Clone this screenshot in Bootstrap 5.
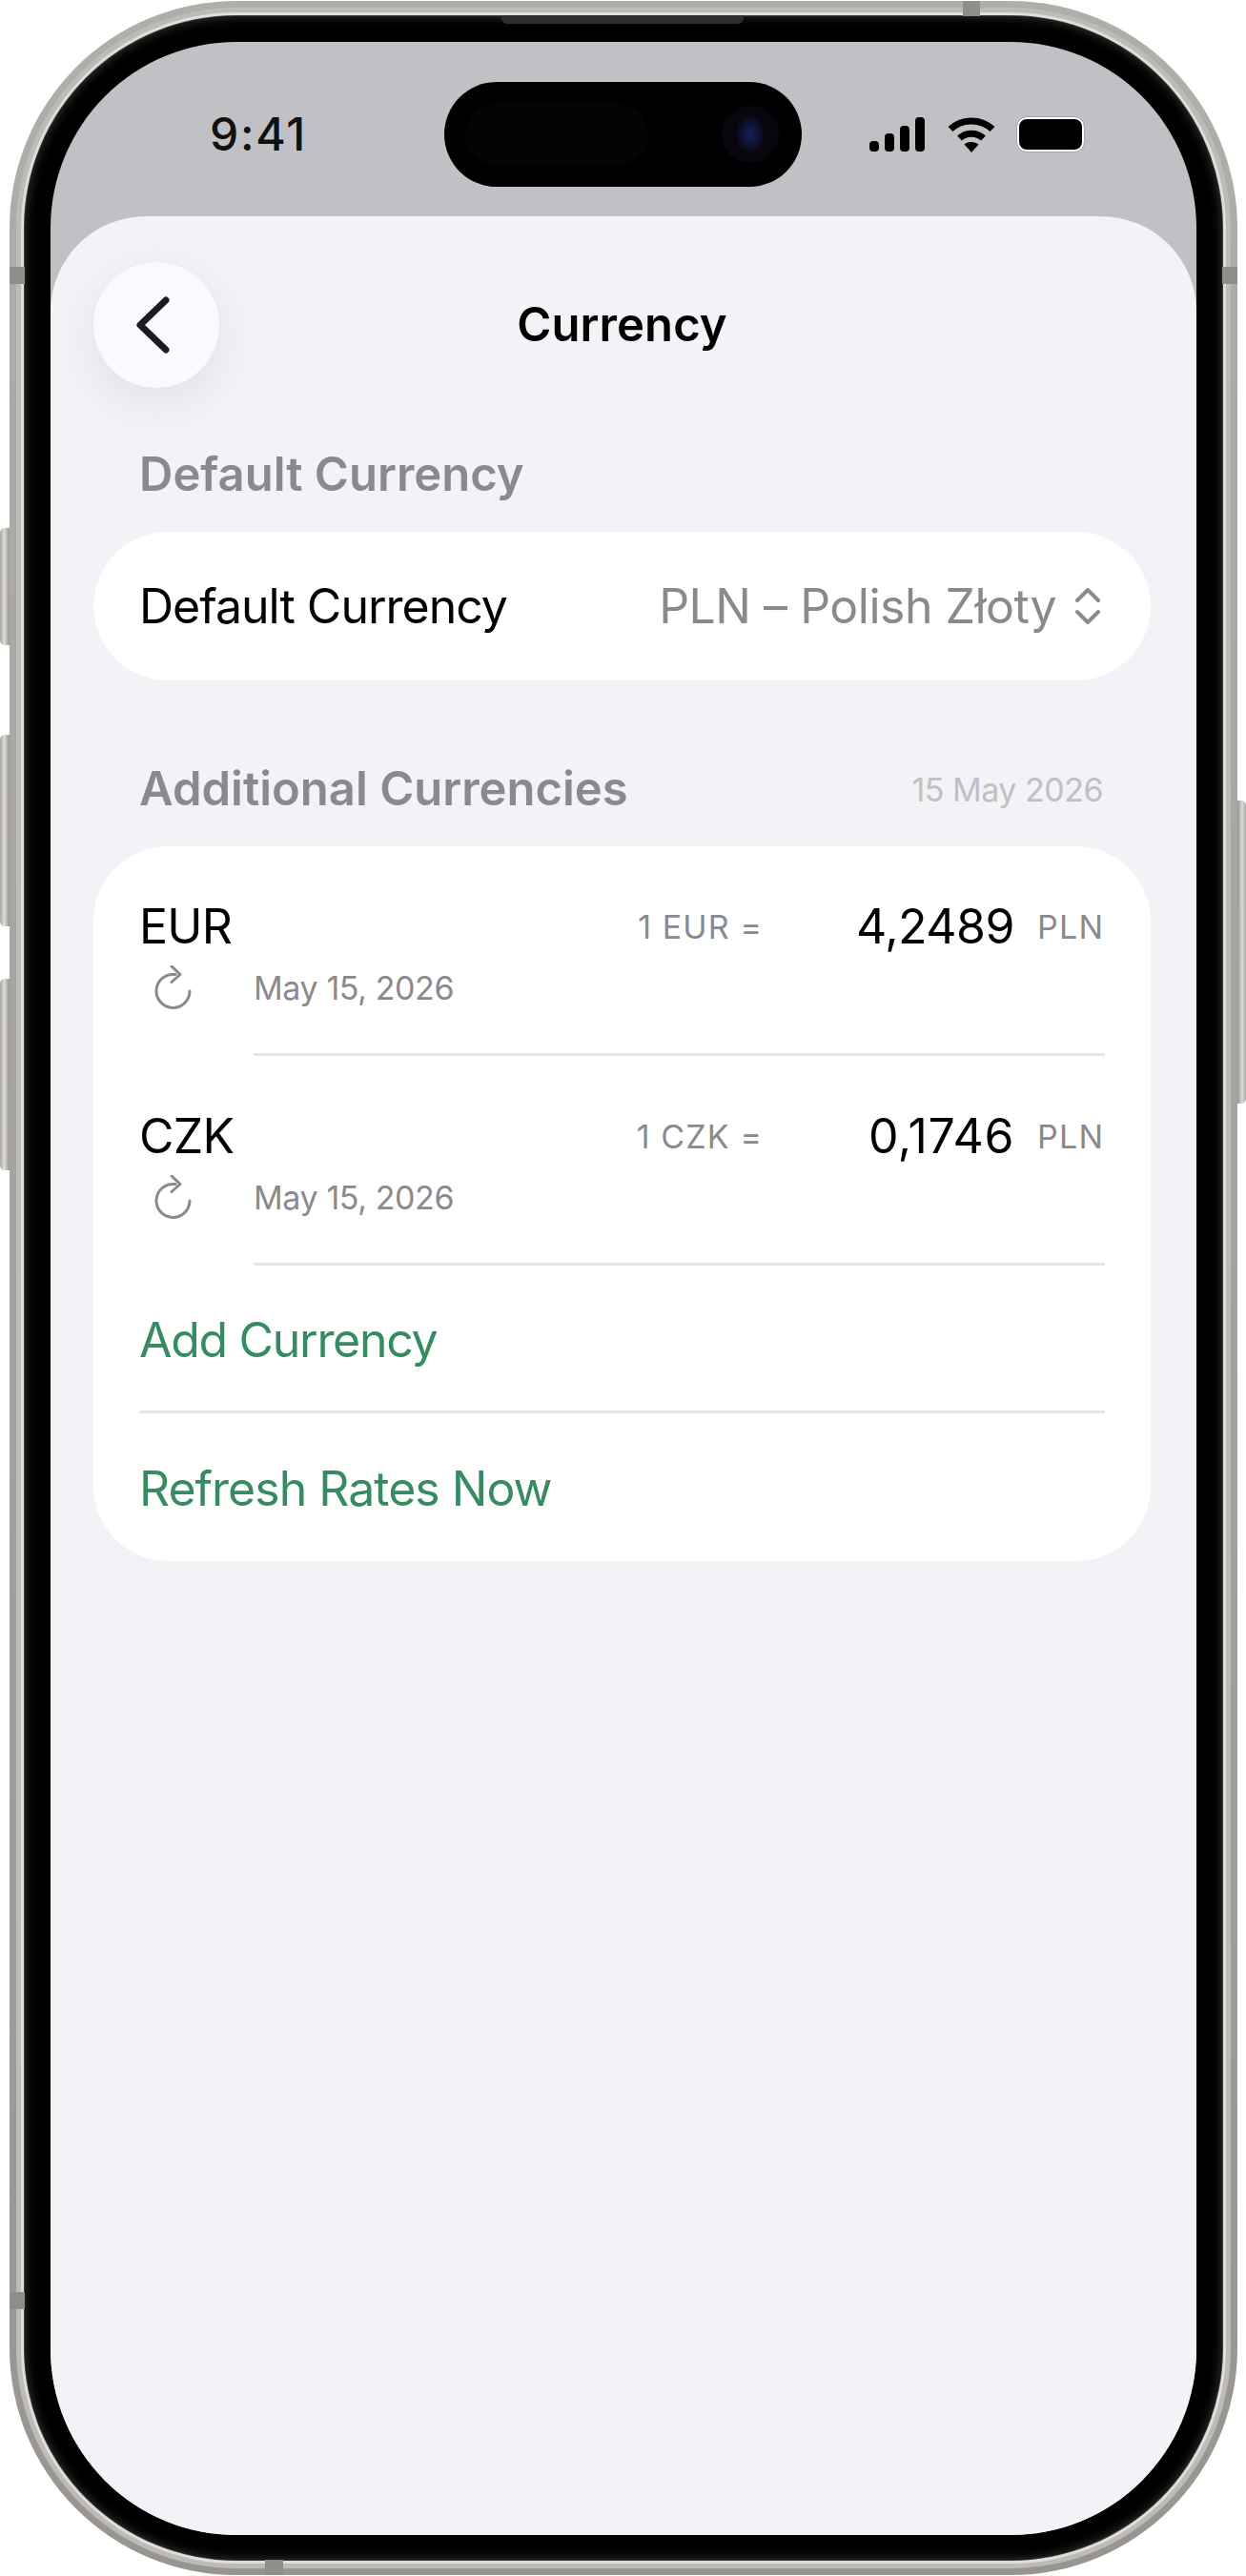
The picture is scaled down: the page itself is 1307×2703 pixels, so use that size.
<!DOCTYPE html>
<html lang="en">
<head>
  <meta charset="UTF-8" />
  <meta name="viewport" content="width=device-width, initial-scale=1.0">
  <title>Currency</title>
  <link href="https://cdn.jsdelivr.net/npm/bootstrap@5.3.3/dist/css/bootstrap.min.css" rel="stylesheet">
  <style>
    body{margin:0;background:#fff;font-family:Inter,"Liberation Sans",sans-serif;color:#000;width:1307px;height:2703px;overflow:hidden}
    /* ---------- phone frame ---------- */
    .phone-shell{position:relative;width:1288px;height:2701px;margin:1px 0 0 10px;padding:16px;border-radius:238px;background:linear-gradient(180deg,#b0aea8,#a3a09b 60%,#989591)}
    .phone-bezel{height:100%;padding:27px 27px 26px 27px;background:#000;border-radius:222px;box-shadow:0 0 0 1px #3c3c3a,0 0 0 4px #dfded8,0 0 0 9px #bdbbb6,inset 0 0 12px #3a3a3a}
    .phone-screen{height:100%;background:#c1c1c5;border-radius:195px;overflow:hidden;display:flex;flex-direction:column}
    .side-btn{position:absolute;width:10px;background:linear-gradient(90deg,#a8a6a2,#dedcd7 45%,#969490);border-radius:5px 0 0 5px}
    .side-btn.left{left:-10px}
    .side-btn.right{right:-9px;width:9px;border-radius:0 5px 5px 0;background:linear-gradient(90deg,#969490,#dedcd7 55%,#a8a6a2)}
    .band{position:absolute;background:#8f8d88}
    .speaker{position:absolute;left:516px;top:15px;width:254px;height:9px;background:#2e2e2e;border-radius:0 0 6px 6px}

    /* ---------- status bar ---------- */
    .status-bar{flex:0 0 183px;padding-top:42px;display:flex}
    .status-time{width:413px;height:110px;padding-left:167px;font-size:48px;line-height:110px;font-weight:500;letter-spacing:1.700px;color:#111}
    .island{width:375px;height:110px;background:#000;border-radius:55px;position:relative}
    .island-pill{position:absolute;left:22px;top:22px;width:192px;height:66px;border-radius:33px;background:#040404}
    .island-ring{position:absolute;right:24px;top:25px;width:60px;height:60px;border-radius:50%;background:#08060c}
    .island-lens{position:absolute;right:40px;top:36px;width:28px;height:38px;border-radius:50%;background:radial-gradient(ellipse at 50% 50%,#16225a 0,#10163a 35%,#0a0a16 70%,#050508 100%)}
    .status-icons{padding:0 0 0 71px;height:110px;display:flex;align-items:center}
    .battery-box{width:70px;height:36px;margin-left:23px;background:#000;border:2.5px solid #fff;outline:1px solid #a9a9ad;border-radius:10px}

    /* ---------- sheet ---------- */
    .sheet{flex:1;background:#f2f2f7;border-radius:100px 100px 0 0;padding:48px 48px 0 45px}
    .nav-row{display:grid;grid-template-columns:132px 1fr 132px;align-items:center;height:132px}
    .back-btn{width:132px;height:132px;border-radius:50%;background:#fafafe;border:0;padding:0 8px 0 0;box-shadow:0 14px 50px rgba(0,0,0,.08);display:flex;align-items:center;justify-content:center}
    .nav-title{text-align:center;font-size:49px;font-weight:600;line-height:60px;letter-spacing:.1px;margin:0}
    .section-label{display:flex;justify-content:space-between;align-items:center;padding:0 50px 0 48px;height:60px;margin-bottom:30px;color:#8a8a8e;font-size:49px;font-weight:600;letter-spacing:0}
    .section-date{font-size:34px;font-weight:400;color:#c0c0c4;letter-spacing:-.5px}
    .group-box{background:#fff;border-radius:78px;padding:0 49px 0 48px}
    .default-row{height:156px;display:flex;justify-content:space-between;align-items:center;font-size:50px;letter-spacing:-1px}
    .default-value{display:flex;align-items:center;gap:20px;color:#8a8a8e;padding-right:4px;letter-spacing:-.5px}

    .rate-row{padding-top:54px;padding-bottom:47px}
    .rate-row .code-line{display:flex;align-items:center;height:60px}
    .rate-code{font-size:50px;line-height:60px;flex:1;letter-spacing:-.7px}
    .rate-label{font-size:34px;color:#8a8a8e;letter-spacing:1.100px}
    .rate-num{width:264px;text-align:right;font-size:50px;letter-spacing:-.5px}
    .rate-num.wide-ones{letter-spacing:.6px}
    .rate-unit{width:70px;margin-left:24px;text-align:right;font-size:34px;color:#8a8a8e;letter-spacing:1.300px}
    .sub-line{display:flex;align-items:center;height:44px;margin-top:12px;font-size:34px;color:#8a8a8e;letter-spacing:-.4px}
    .refresh-cell{width:120px;padding-left:16px;display:flex}
    .rule{height:3px;background:#e6e6e8}
    .rule-in{margin-left:120px;margin-right:-1px}
    .rule-full{margin-right:-1px}
    .action-row{font-size:50px;line-height:60px;color:#368b61;padding-top:48px;letter-spacing:-1px}
    .action-row.first{padding-bottom:44px;letter-spacing:-1.300px}
    .action-row.last{padding-top:49px;padding-bottom:46px}
  </style>
</head>
<body>
  <div class="phone-shell">
    <!-- side buttons -->
    <div class="side-btn left" style="top:553px;height:123px"></div>
    <div class="side-btn left" style="top:770px;height:201px"></div>
    <div class="side-btn left" style="top:1026px;height:201px"></div>
    <div class="side-btn right" style="top:839px;height:318px"></div>
    <!-- antenna bands -->
    <div class="band" style="left:0;top:279px;width:16px;height:18px"></div>
    <div class="band" style="right:0;top:279px;width:16px;height:18px"></div>
    <div class="band" style="left:0;top:2404px;width:16px;height:18px"></div>
    <div class="band" style="left:268px;bottom:0;width:19px;height:16px"></div>
    <div class="band" style="left:1000px;top:0;width:18px;height:16px"></div>
    <div class="speaker"></div>

    <div class="phone-bezel">
      <div class="phone-screen">
        <div class="status-bar">
          <div class="status-time">9:41</div>
          <div class="island"><div class="island-pill"></div><div class="island-ring"></div><div class="island-lens"></div></div>
          <div class="status-icons">
            <svg width="58" height="36" viewBox="0 0 58 36" fill="#000">
              <rect x="0" y="25" width="10" height="11" rx="4"/>
              <rect x="16" y="17" width="10" height="19" rx="4"/>
              <rect x="32" y="9" width="10" height="27" rx="4"/>
              <rect x="48" y="0" width="10" height="36" rx="4"/>
            </svg>
            <svg class="ms-4" width="50" height="37" viewBox="0 0 50 37" fill="none" stroke="#000" stroke-width="7">
              <path d="M3 12.5C15 1 35 1 47 12.5"/>
              <path d="M12.5 22C19.500 15.500 30.500 15.500 37.500 22"/>
              <path d="M25 37l-7.500-8.500c4-3.500 11-3.500 15 0z" fill="#000" stroke="none"/>
            </svg>
            <div class="battery-box"></div>
          </div>
        </div>

        <div class="sheet">
          <div class="nav-row">
            <button class="back-btn" type="button" aria-label="Back">
              <svg width="36" height="60" viewBox="0 0 36 60" fill="none" stroke="#1c1c20" stroke-width="7" stroke-linecap="round" stroke-linejoin="round"><path d="M32 4L5 30l27 26"/></svg>
            </button>
            <h1 class="nav-title">Currency</h1>
            <div></div>
          </div>

          <div class="section-label" style="margin-top:61px">Default Currency</div>
          <div class="group-box">
            <div class="default-row">
              <span>Default Currency</span>
              <span class="default-value">PLN – Polish Złoty
                <svg width="26" height="38" viewBox="0 0 26 38" fill="none" stroke="#8a8a8e" stroke-width="4" stroke-linecap="round" stroke-linejoin="round"><path d="M2 13L13 2l11 11M2 25l11 11 11-11"/></svg>
              </span>
            </div>
          </div>

          <div class="section-label" style="margin-top:84px">Additional Currencies<span class="section-date">15 May 2026</span></div>
          <div class="group-box">
            <div class="rate-row">
              <div class="code-line">
                <span class="rate-code">EUR</span>
                <span class="rate-label">1 EUR =</span>
                <span class="rate-num">4,2489</span>
                <span class="rate-unit">PLN</span>
              </div>
              <div class="sub-line">
                <span class="refresh-cell">
                  <svg width="40" height="46" viewBox="0 0 40 46" fill="none" stroke="#8a8a8e" stroke-width="3" stroke-linecap="round" stroke-linejoin="round"><path d="M22 9.600A17.500 17.500 0 1 0 37 27"/><path d="M18 1l9 8.500-9 8"/></svg>
                </span>
                May 15, 2026
              </div>
            </div>
            <div class="rule rule-in"></div>
            <div class="rate-row">
              <div class="code-line">
                <span class="rate-code">CZK</span>
                <span class="rate-label">1 CZK =</span>
                <span class="rate-num wide-ones">0,1746</span>
                <span class="rate-unit">PLN</span>
              </div>
              <div class="sub-line">
                <span class="refresh-cell">
                  <svg width="40" height="46" viewBox="0 0 40 46" fill="none" stroke="#8a8a8e" stroke-width="3" stroke-linecap="round" stroke-linejoin="round"><path d="M22 9.600A17.500 17.500 0 1 0 37 27"/><path d="M18 1l9 8.500-9 8"/></svg>
                </span>
                May 15, 2026
              </div>
            </div>
            <div class="rule rule-in"></div>
            <div class="action-row first">Add Currency</div>
            <div class="rule rule-full"></div>
            <div class="action-row last">Refresh Rates Now</div>
          </div>
        </div>
      </div>
    </div>
  </div>
  <script src="https://cdn.jsdelivr.net/npm/bootstrap@5.3.3/dist/js/bootstrap.bundle.min.js"></script>
</body>
</html>
